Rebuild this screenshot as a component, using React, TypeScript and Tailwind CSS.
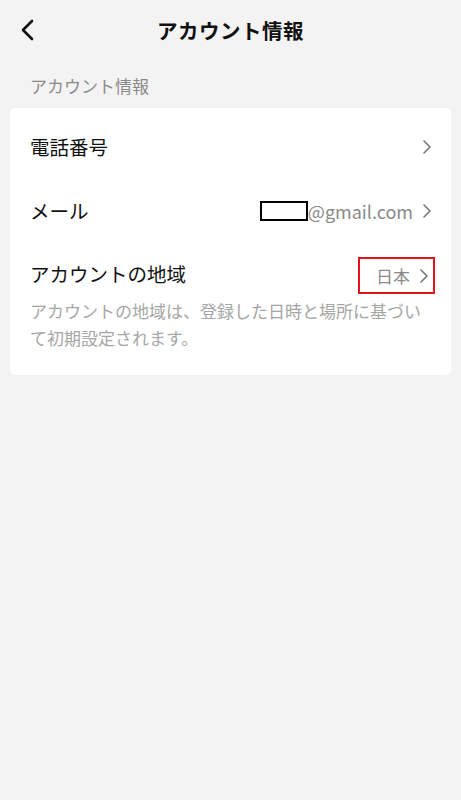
import React from 'react';

const font = { fontFamily: '"Noto Sans CJK JP", "Noto Sans", sans-serif' };

function Chevron({ className = '' }: { className?: string }) {
  return (
    <svg width="10" height="16" viewBox="0 0 10 16" className={className} fill="none">
      <path d="M2 2l6 6-6 6" stroke="currentColor" strokeWidth="1.6" strokeLinecap="round" strokeLinejoin="round" />
    </svg>
  );
}

export default function App() {
  return (
    <div className="min-h-[800px] w-full bg-[#f3f3f3] text-[#111]" style={font}>
      {/* header */}
      <div className="relative flex h-[60px] items-center justify-center">
        <svg width="16" height="22" viewBox="0 0 16 22" className="absolute left-[19px] top-[19px]" fill="none">
          <path d="M13 2L4 11l9 9" stroke="#111" strokeWidth="2.6" strokeLinecap="round" strokeLinejoin="round" />
        </svg>
        <h1 className="text-[20.5px] font-bold tracking-[0.5px]">アカウント情報</h1>
      </div>

      <div className="px-[30px] pt-[13px] pb-[9px] text-[17px] leading-[26px] text-[#8a8a8a]">アカウント情報</div>

      <div className="mx-[10px] rounded-[5px] bg-white pt-[7px] pb-[24px]">
        <div className="flex h-[64px] items-center justify-between pl-[20px] pr-[19px]">
          <span className="text-[19.5px]">電話番号</span>
          <Chevron className="text-[#777]" />
        </div>
        <div className="flex h-[64px] items-center justify-between pl-[20px] pr-[19px]">
          <span className="text-[19.5px]">メール</span>
          <div className="flex items-center gap-[9px]">
            <div className="flex items-center">
              <span className="h-[20px] w-[48px] border-2 border-black"></span>
              <span className="text-[18px] text-[#8a8a8a]">@gmail.com</span>
            </div>
            <Chevron className="text-[#777]" />
          </div>
        </div>
        <div className="flex h-[54px] items-start justify-between pl-[20px] pr-[16px] pt-[17px]">
          <span className="text-[19.5px] leading-[28px]">アカウントの地域</span>
          <div className="-mt-[3px] flex h-[37px] w-[77px] items-center justify-end gap-[9px] border-2 border-[#e3121b] pr-[4px]">
            <span className="text-[17px] text-[#8a8a8a]">日本</span>
            <Chevron className="text-[#777]" />
          </div>
        </div>
        <p className="px-[20px] text-[17px] leading-[27px] text-[#a6a6a6]">
          アカウントの地域は、登録した日時と場所に基づいて初期設定されます。
        </p>
      </div>
    </div>
  );
}
